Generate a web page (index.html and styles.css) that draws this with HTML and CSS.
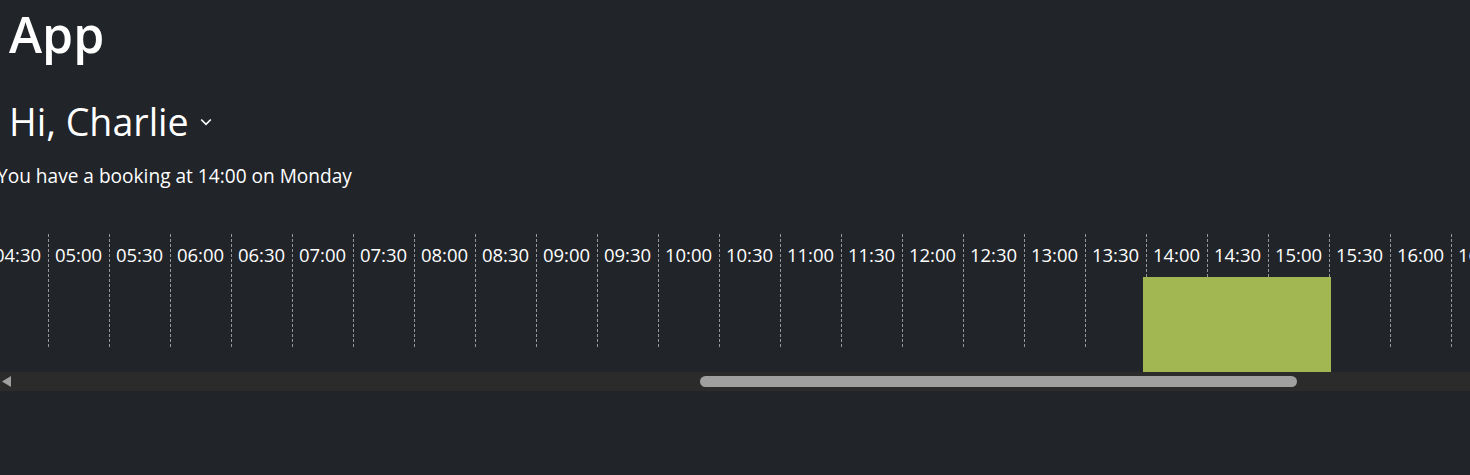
FILE: index.html
```html
<!DOCTYPE html>
<html lang="en">
<head>
<meta charset="utf-8">
<title>App</title>
<link rel="stylesheet" href="styles.css">
</head>
<body>
<h1 class="app-title">App</h1>
<div class="greeting">
  <span class="greeting-name">Hi, Charlie</span>
  <svg class="chevron" width="12" height="8" viewBox="0 0 12 8"><path d="M1.2 1.5 L6 6.3 L10.8 1.5" fill="none" stroke="#fff" stroke-width="1.7"/></svg>
</div>
<p class="booking-note">You have a booking at 14:00 on Monday</p>
<div class="timeline">
  <div class="timeline-track">
    <div class="slot"><span>04:00</span></div>
    <div class="slot"><span>04:30</span></div>
    <div class="slot"><span>05:00</span></div>
    <div class="slot"><span>05:30</span></div>
    <div class="slot"><span>06:00</span></div>
    <div class="slot"><span>06:30</span></div>
    <div class="slot"><span>07:00</span></div>
    <div class="slot"><span>07:30</span></div>
    <div class="slot"><span>08:00</span></div>
    <div class="slot"><span>08:30</span></div>
    <div class="slot"><span>09:00</span></div>
    <div class="slot"><span>09:30</span></div>
    <div class="slot"><span>10:00</span></div>
    <div class="slot"><span>10:30</span></div>
    <div class="slot"><span>11:00</span></div>
    <div class="slot"><span>11:30</span></div>
    <div class="slot"><span>12:00</span></div>
    <div class="slot"><span>12:30</span></div>
    <div class="slot"><span>13:00</span></div>
    <div class="slot"><span>13:30</span></div>
    <div class="slot"><span>14:00</span></div>
    <div class="slot"><span>14:30</span></div>
    <div class="slot"><span>15:00</span></div>
    <div class="slot"><span>15:30</span></div>
    <div class="slot"><span>16:00</span></div>
    <div class="slot"><span>16:30</span></div>
    <div class="slot"><span>17:00</span></div>
    <div class="booking"></div>
  </div>
  <div class="scrollbar">
    <div class="scroll-arrow"></div>
    <div class="scroll-thumb"></div>
  </div>
</div>
</body>
</html>
```
FILE: styles.css
```css
html, body {
  margin: 0;
  padding: 0;
  background: #212429;
  color: #fff;
  font-family: "Open Sans", "Noto Sans", sans-serif;
  overflow: hidden;
}
.app-title {
  margin: 0;
  padding: 4px 0 0 9px;
  font-size: 50px;
  font-weight: 600;
  line-height: 60px;
}
.greeting {
  display: flex;
  align-items: center;
  gap: 11px;
  margin-top: 35px;
  padding-left: 9px;
  height: 46px;
}
.greeting-name {
  font-size: 37.6px;
  line-height: 46px;
}
.booking-note {
  margin: 18px 0 0 -3px;
  font-size: 19.1px;
  line-height: 26px;
}
.timeline {
  margin-top: 45px;
  width: 1470px;
  overflow: hidden;
}
.timeline-track {
  position: relative;
  display: flex;
  height: 138px;
  margin-left: -74px;
}
.slot {
  flex: 0 0 61px;
  height: 113px;
  background: linear-gradient(#979797 60%, transparent 60%) left top / 1px 5px repeat-y;
  display: flex;
  justify-content: center;
}
.slot span {
  font-size: 18.5px;
  line-height: 25px;
  margin-top: 8px;
  height: 25px;
  white-space: nowrap;
}
.booking {
  position: absolute;
  left: 1217px;
  top: 43px;
  width: 188px;
  height: 95px;
  background: #a2b752;
}
.scrollbar {
  position: relative;
  height: 19px;
  background: #2b2b2b;
}
.scroll-arrow {
  position: absolute;
  left: 2px;
  top: 4px;
  width: 9px;
  height: 11px;
  background: #a0a0a0;
  clip-path: polygon(0 50%, 100% 0, 100% 100%);
}
.scroll-thumb {
  position: absolute;
  left: 700px;
  top: 4px;
  width: 597px;
  height: 11px;
  border-radius: 6px;
  background: #a0a0a0;
}
```
